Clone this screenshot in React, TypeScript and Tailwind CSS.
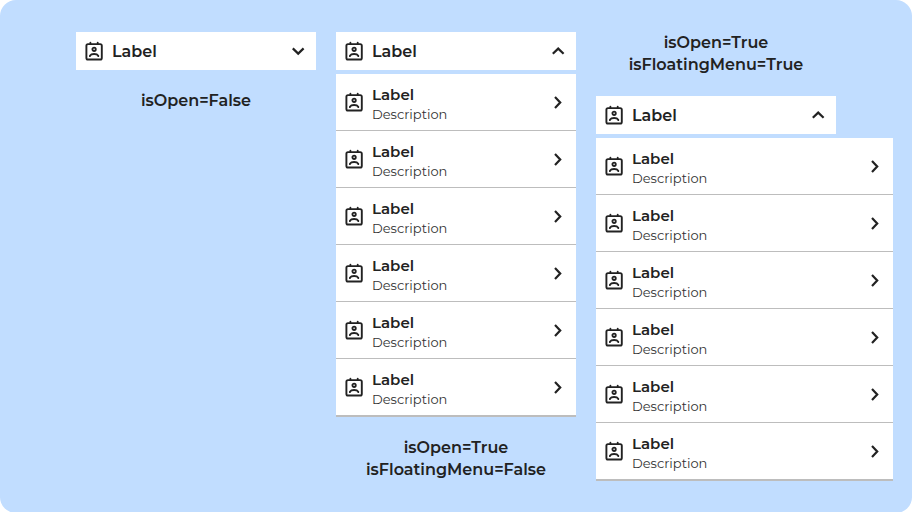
import React from 'react';

interface DropdownProps {
  isOpen?: boolean;
  isFloatingMenu?: boolean;
}

interface MenuEntry {
  label: string;
  description: string;
}

const entries: MenuEntry[] = Array.from({ length: 6 }, () => ({
  label: 'Label',
  description: 'Description',
}));

const ContactIcon = () => (
  <svg
    viewBox="0 0 20 20"
    className="h-5 w-5 shrink-0"
    fill="none"
    stroke="currentColor"
    strokeLinecap="round"
    strokeLinejoin="round"
    aria-hidden="true"
  >
    <rect x="2.4" y="3.1" width="15.4" height="15.4" rx="1.6" strokeWidth="1.9" />
    <path d="M6.4 3V1.6M13.7 3V1.6" strokeWidth="1.8" />
    <circle cx="10.1" cy="8.3" r="1.7" strokeWidth="1.8" />
    <path d="M5.9 15.2v-.5c.7-1.1 2.3-1.7 4.2-1.7s3.5.6 4.2 1.7v.5" strokeWidth="1.8" />
  </svg>
);

const chevrons = {
  down: 'M4.8 7.4L10.2 12.6L15.6 7.4',
  up: 'M4.8 12.8L10.2 7.6L15.6 12.8',
  right: 'M7 5.1L12.2 10.5L7 15.9',
};

const Chevron = ({ direction }: { direction: keyof typeof chevrons }) => (
  <svg
    viewBox="0 0 20 20"
    className="ml-auto h-5 w-5 shrink-0"
    fill="none"
    stroke="currentColor"
    strokeWidth="2.2"
    aria-hidden="true"
  >
    <path d={chevrons[direction]} />
  </svg>
);

const Menu = ({ isFloating }: { isFloating: boolean }) => (
  <ul className={isFloating ? 'mt-1 w-[297px]' : 'mt-1 w-full'}>
    {entries.map((entry, index) => (
      <li key={index} className="border-b border-[#bdbdbd] bg-white last:border-b-2">
        <button type="button" className="flex h-14 w-full items-center gap-2 px-2 text-left">
          <ContactIcon />
          <span className="flex flex-col pt-1">
            <span className="text-[15px] leading-5 font-semibold">{entry.label}</span>
            <span className="text-[13px] leading-[18px] text-[#333]">{entry.description}</span>
          </span>
          <Chevron direction="right" />
        </button>
      </li>
    ))}
  </ul>
);

const Dropdown = ({ isOpen = false, isFloatingMenu = false }: DropdownProps) => (
  <div className="w-full">
    <button
      type="button"
      aria-expanded={isOpen}
      className="flex w-full items-center gap-2 bg-white px-2 py-[7px] text-base leading-[22px] font-semibold"
    >
      <ContactIcon />
      <span className="pt-0.5">Label</span>
      <Chevron direction={isOpen ? 'up' : 'down'} />
    </button>
    {isOpen && <Menu isFloating={isFloatingMenu} />}
  </div>
);

const Caption = ({ lines }: { lines: string[] }) => (
  <p className="text-center text-base leading-[22px] font-semibold">
    {lines.map((line) => (
      <span key={line} className="block">
        {line}
      </span>
    ))}
  </p>
);

const App = () => (
  <main className="flex min-h-screen items-start justify-center gap-5 rounded-2xl bg-[#c1ddff] py-8 font-['Montserrat','Inter',sans-serif] text-[#222]">
    <section className="flex w-60 flex-col gap-5">
      <Dropdown />
      <Caption lines={['isOpen=False']} />
    </section>
    <section className="flex w-60 flex-col gap-5">
      <Dropdown isOpen />
      <Caption lines={['isOpen=True', 'isFloatingMenu=False']} />
    </section>
    <section className="flex w-60 flex-col gap-5">
      <Caption lines={['isOpen=True', 'isFloatingMenu=True']} />
      <Dropdown isOpen isFloatingMenu />
    </section>
  </main>
);

export default App;
